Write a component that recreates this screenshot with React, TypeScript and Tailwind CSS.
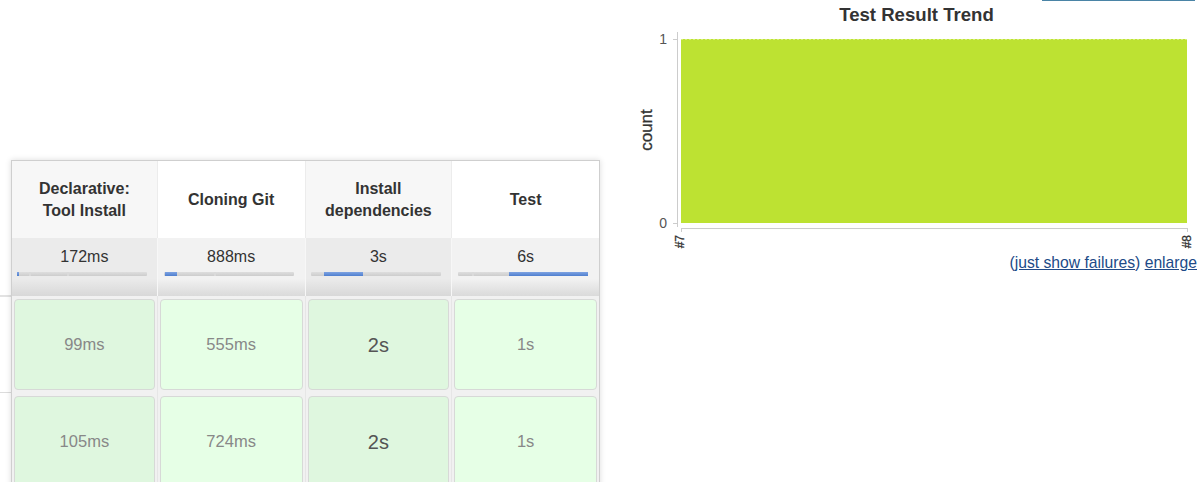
import React from "react";

interface Stage {
  name: string[];
  avg: string;
  blue: { left: number; width: number };
  seps: number[];
}

const stages: Stage[] = [
  { name: ["Declarative:", "Tool Install"], avg: "172ms", blue: { left: 0, width: 2 }, seps: [12, 50] },
  { name: ["Cloning Git"], avg: "888ms", blue: { left: 1, width: 12 }, seps: [50] },
  { name: ["Install", "dependencies"], avg: "3s", blue: { left: 13, width: 39 }, seps: [] },
  { name: ["Test"], avg: "6s", blue: { left: 51, width: 79 }, seps: [14] },
];

const runs = [
  ["99ms", "555ms", "2s", "1s"],
  ["105ms", "724ms", "2s", "1s"],
];

// column widths incl. left separator
const colW = ["w-[145px]", "w-[148px] border-l", "w-[147px] border-l", "w-[148px] border-l"];

function ProgressBar({ stage }: { stage: Stage }) {
  return (
    <div className="relative w-[130px] h-[4px] rounded-[1px] bg-[linear-gradient(to_bottom,#dedede,#cdcdcd)]">
      {stage.seps.map((s) => (
        <div key={s} className="absolute top-0 h-[4px] w-[2px] bg-[#dadada]" style={{ left: s }} />
      ))}
      <div
        className="absolute top-0 h-[4px] bg-[linear-gradient(to_bottom,#7ea3e2,#4f7fcf)]"
        style={{ left: stage.blue.left, width: stage.blue.width }}
      />
    </div>
  );
}

function StageView() {
  return (
    <div className="w-[589px] border border-[#cfcfcf] shadow-[0_0_6px_rgba(0,0,0,0.14)] bg-white">
      {/* header */}
      <div className="flex h-[77px]">
        {stages.map((s, i) => (
          <div
            key={i}
            className={`${colW[i]} border-[#ececec] flex flex-col items-center justify-center text-[16px] leading-[22px] font-bold text-[#333] ${
              i % 2 === 0 ? "bg-[#f7f7f7]" : "bg-white"
            }`}
          >
            {s.name.map((l) => (
              <span key={l}>{l}</span>
            ))}
          </div>
        ))}
      </div>
      {/* averages */}
      <div className="flex h-[58px]">
        {stages.map((s, i) => (
          <div
            key={i}
            className={`${colW[i]} border-[#f7f7f7] pt-[10px] ${
              i % 2 === 0
                ? "bg-[linear-gradient(to_bottom,#ebebeb_70%,#d8d8d8)]"
                : "bg-[linear-gradient(to_bottom,#f2f2f2_70%,#dadada)]"
            }`}
          >
            <div className="text-center text-[16px] leading-[18px] text-[#333]">{s.avg}</div>
            <div className={`mt-[6px] ${i === 0 || i === 2 ? "pl-[5px]" : "pl-[6px]"}`}>
              <ProgressBar stage={s} />
            </div>
          </div>
        ))}
      </div>
      {/* runs */}
      {runs.map((row, r) => (
        <div key={r} className="flex h-[97px]">
          {row.map((t, i) => (
            <div key={i} className={`${colW[i]} border-[#e6e6e6] bg-[#f1f1f1] py-[3px] px-[2px]`}>
              <div
                className={`h-[91px] rounded-[4px] border border-[#d7d9d7] flex items-center justify-center ${
                  i % 2 === 0 ? "bg-[#dff7df]" : "bg-[#e6ffe6]"
                } ${t === "2s" ? "text-[20px] text-[#555]" : "text-[16.5px] text-[#888]"}`}
              >
                {t}
              </div>
            </div>
          ))}
        </div>
      ))}
    </div>
  );
}

function TrendChart() {
  return (
    <svg width="573" height="226" className="block">
      {/* y axis */}
      <line x1="47.5" y1="4" x2="47.5" y2="199" stroke="#cccccc" />
      <line x1="43" y1="11.5" x2="47" y2="11.5" stroke="#cccccc" />
      <line x1="43" y1="195.5" x2="47" y2="195.5" stroke="#cccccc" />
      <text x="37" y="16" textAnchor="end" fontSize="14" fill="#555">1</text>
      <text x="37" y="200" textAnchor="end" fontSize="14" fill="#555">0</text>
      <text transform="translate(22,102) rotate(-90)" textAnchor="middle" fontSize="17" fill="#333" fontWeight="500" stroke="#333" strokeWidth="0.3">count</text>
      {/* data */}
      <rect x="51" y="11" width="506" height="184" fill="#bde232" />
      <line x1="51" y1="11.5" x2="557" y2="11.5" stroke="#d5ee7a" strokeDasharray="2 2" />
      {/* x axis */}
      <line x1="51" y1="200.5" x2="558" y2="200.5" stroke="#cccccc" />
      <line x1="51.5" y1="200" x2="51.5" y2="204" stroke="#cccccc" />
      <line x1="557.5" y1="200" x2="557.5" y2="204" stroke="#cccccc" />
      <text transform="translate(54,207) rotate(-90)" textAnchor="end" fontSize="12" fill="#333" stroke="#333" strokeWidth="0.3">#7</text>
      <text transform="translate(561,207) rotate(-90)" textAnchor="end" fontSize="12" fill="#333" stroke="#333" strokeWidth="0.3">#8</text>
    </svg>
  );
}

export default function App() {
  return (
    <div className="relative w-[1203px] h-[482px] overflow-hidden bg-white font-['Liberation_Sans',Arial,sans-serif]">
      <div className="absolute top-0 left-[1042px] w-[153px] h-px bg-[#4a84a6]" />
      <div className="flex">
        {/* hidden build history edge */}
        <div className="w-[11px] pt-[295px]">
          <div className="h-[97px] border-t-2 border-[#e2e2e2]" />
          <div className="border-t border-[#dcdcdc]" />
        </div>
        <div className="w-[619px] pt-[160px]">
          <StageView />
        </div>
        <div className="w-[573px] flex flex-col">
          <div className="pt-[4px] h-[28px] text-center text-[18.6px] leading-[22px] font-bold text-[#333]">
            Test Result Trend
          </div>
          <TrendChart />
          <div className="pr-[6px] text-right text-[15.7px] leading-[18px] text-[#204a87]">
            (<a className="underline" href="#">just show failures</a>) <a className="underline" href="#">enlarge</a>
          </div>
        </div>
      </div>
    </div>
  );
}
